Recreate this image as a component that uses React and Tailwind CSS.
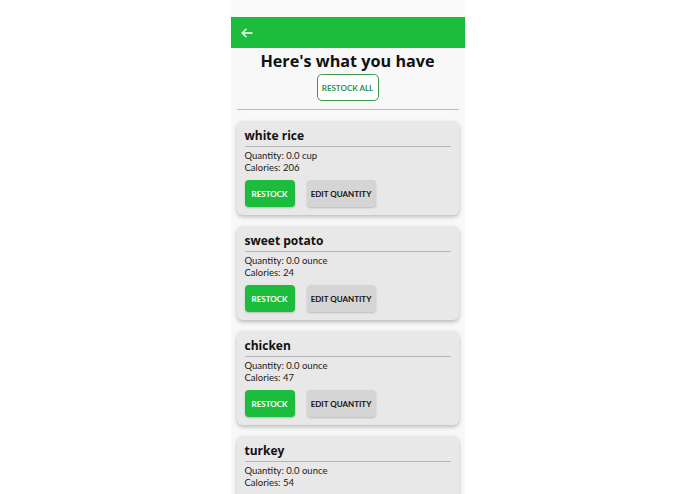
import React from "react";

const items = [
  { name: "white rice", qty: "0.0 cup", cal: 206 },
  { name: "sweet potato", qty: "0.0 ounce", cal: 24 },
  { name: "chicken", qty: "0.0 ounce", cal: 47 },
  { name: "turkey", qty: "0.0 ounce", cal: 54 },
];

function Card({ item }) {
  return (
    <div className="bg-[#e8e8e8] rounded-[6px] shadow-[0_2px_4px_rgba(0,0,0,0.25)] px-2 pt-[6px] pb-2 h-[94px] shrink-0">
      <div className="text-[12px] leading-[18px] font-bold text-[#111] font-['Open_Sans',sans-serif]">{item.name}</div>
      <div className="h-px bg-[#b5b5b5] mt-[1px]" />
      <div className="mt-[3px] text-[9.5px] leading-[12px] text-[#1a1a1a] font-['Lato',sans-serif]">
        <div>Quantity: {item.qty}</div>
        <div>Calories: {item.cal}</div>
      </div>
      <div className="flex gap-3 mt-[6px]">
        <div className="w-[50px] h-[27px] rounded-[4px] bg-[#1cbc3c] text-white text-[8px] font-bold font-['Lato',sans-serif] flex items-center justify-center shadow-[0_1px_2px_rgba(0,0,0,0.2)]">RESTOCK</div>
        <div className="w-[69px] h-[27px] rounded-[4px] bg-[#d5d5d5] text-[#111] text-[8px] font-bold font-['Lato',sans-serif] flex items-center justify-center shadow-[0_1px_2px_rgba(0,0,0,0.2)]">EDIT QUANTITY</div>
      </div>
    </div>
  );
}

export default function App() {
  return (
    <div className="w-[695px] h-[494px] bg-white flex justify-center overflow-hidden">
      <div className="w-[234px] h-[494px] bg-[#f8f8f8] flex flex-col overflow-hidden">
        <div className="h-[17px] bg-[#fafafa] shrink-0" />
        <div className="h-[31px] bg-[#1cbc3c] flex items-center px-[10px] shrink-0">
          <svg width="12" height="10" viewBox="0 0 12 10" fill="none" stroke="white" strokeWidth="1.5" strokeLinecap="round" strokeLinejoin="round">
            <path d="M11 5H1.5M5 1.2L1.2 5L5 8.8" />
          </svg>
        </div>
        <div className="flex flex-col items-center shrink-0">
          <div className="text-[16.2px] leading-[24px] font-bold text-[#111] font-['Open_Sans',sans-serif] mt-[1px]">Here's what you have</div>
          <div className="mt-[1px] w-[62px] h-[27px] border-[1.5px] border-[#3a9a4a] rounded-[5px] bg-white flex items-center justify-center text-[8px] font-bold text-[#2f8f42] font-['Lato',sans-serif]">RESTOCK ALL</div>
        </div>
        <div className="mx-[6px] h-px bg-[#bdbdbd] mt-[8px] shrink-0" />
        <div className="flex flex-col gap-[11px] px-[6px] mt-[11px]">
          {items.map((it) => (
            <Card key={it.name} item={it} />
          ))}
        </div>
      </div>
    </div>
  );
}
